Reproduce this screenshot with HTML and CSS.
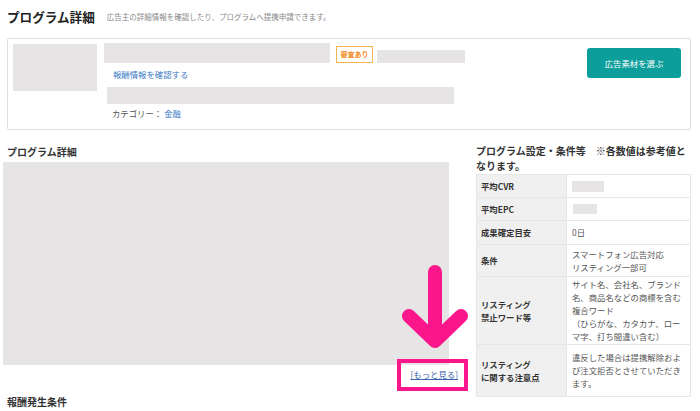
FILE: index.html
```html
<!DOCTYPE html>
<html lang="ja">
<head>
<meta charset="utf-8">
<link rel="stylesheet" href="styles.css">
</head>
<body>
<header class="page-head">
  <h1 class="page-title">プログラム詳細</h1>
  <p class="page-sub">広告主の詳細情報を確認したり、プログラムへ提携申請できます。</p>
</header>

<section class="card">
  <div class="thumb"></div>
  <div class="info">
    <div class="info-top">
      <div class="ph ph-title"></div>
      <span class="badge">審査あり</span>
      <div class="ph ph-small"></div>
    </div>
    <a class="link reward-link" href="#">報酬情報を確認する</a>
    <div class="ph ph-wide"></div>
    <p class="category">カテゴリー： <a class="link" href="#">金融</a></p>
  </div>
  <button class="btn-primary">広告素材を選ぶ</button>
</section>

<main class="main">
  <div class="left-col">
    <h2 class="sec-title">プログラム詳細</h2>
    <div class="ph detail-box"></div>
    <div class="more-row"><a class="more-link" href="#">[もっと見る]</a></div>
    <h2 class="sec-title sec-title-2">報酬発生条件</h2>
    <svg class="arrow" width="80" height="95" viewBox="0 0 80 95" aria-hidden="true">
      <path d="M40 14 L40 80 M14 58 L40 83 L66 58" fill="none" stroke="#fb168b" stroke-width="14" stroke-linecap="round" stroke-linejoin="round"/>
    </svg>
    <div class="highlight"></div>
  </div>
  <aside class="right-col">
    <h2 class="side-title">プログラム設定・条件等　※各数値は参考値と<br>なります。</h2>
    <table class="spec">
      <tr class="r23"><th>平均CVR</th><td><div class="ph ph-cvr"></div></td></tr>
      <tr class="r23"><th>平均EPC</th><td><div class="ph ph-epc"></div></td></tr>
      <tr class="r24"><th>成果確定目安</th><td>0日</td></tr>
      <tr class="r32"><th>条件</th><td>スマートフォン広告対応<br>リスティング一部可</td></tr>
      <tr class="r68"><th>リスティング<br>禁止ワード等</th><td>サイト名、会社名、ブランド<br>名、商品名などの商標を含む<br>複合ワード<br>（ひらがな、カタカナ、ロー<br>マ字、打ち間違い含む）</td></tr>
      <tr class="r52"><th>リスティング<br>に関する注意点</th><td>違反した場合は提携解除およ<br>び注文拒否とさせていただき<br>ます。</td></tr>
    </table>
  </aside>
</main>
</body>
</html>
```

FILE: styles.css
```css
* { box-sizing: border-box; }
html, body { margin: 0; padding: 0; background: #fff; }
body {
  font-family: "Noto Sans CJK JP", "Noto Sans", sans-serif;
  color: #333;
  width: 700px;
  height: 411px;
  overflow: hidden;
}
h1, h2, p { margin: 0; }

.page-head {
  display: flex;
  align-items: center;
  padding: 8px 7px 0;
  height: 26px;
}
.page-title {
  font-size: 12.6px;
  line-height: 18px;
  font-weight: 700;
  color: #222;
}
.page-sub {
  margin-left: 12px;
  font-size: 7.5px;
  line-height: 18px;
  color: #888;
}

.card {
  margin: 12px 9px 0 7px;
  height: 92px;
  border: 1px solid #dedede;
  border-radius: 2px;
  padding: 4px 9px 0 5px;
  display: flex;
  align-items: flex-start;
}
.ph { background: #e6e4e4; }
.thumb {
  width: 84px;
  height: 47px;
  margin-top: 1px;
  background: #e6e4e4;
}
.info {
  margin-left: 7px;
  display: flex;
  flex-direction: column;
  align-items: flex-start;
  flex: 1;
}
.info-top {
  display: flex;
  align-items: flex-end;
}
.ph-title { width: 226px; height: 20px; }
.badge {
  margin-left: 6px;
  width: 37px;
  height: 17px;
  border: 1px solid #f7b551;
  color: #f08c1c;
  font-size: 7px;
  font-weight: 700;
  line-height: 15px;
  text-align: center;
}
.ph-small { margin-left: 4px; width: 88px; height: 13px; }
.link {
  color: #3b7cc7;
  text-decoration: none;
}
.reward-link {
  margin: 5px 0 0 9px;
  font-size: 8.4px;
  line-height: 12px;
}
.ph-wide { margin: 7px 0 0 3px; width: 347px; height: 17px; }
.category {
  margin: 3px 0 0 8px;
  font-size: 8.4px;
  line-height: 12px;
  color: #555;
}
.btn-primary {
  margin-top: 5px;
  width: 94px;
  height: 30px;
  border: none;
  border-radius: 3px;
  background: #0b9e9b;
  color: #fff;
  font-family: inherit;
  font-size: 8.4px;
  padding: 0;
}

.main {
  display: flex;
  margin-top: 15px;
  padding-left: 3px;
}
.left-col {
  position: relative;
  width: 455px;
}
.sec-title {
  padding-left: 4px;
  font-size: 10px;
  line-height: 14px;
  font-weight: 700;
  color: #333;
}
.detail-box {
  margin-top: 3px;
  width: 446px;
  height: 203px;
}
.more-row {
  margin-top: 3px;
  display: flex;
  justify-content: flex-end;
}
.more-link {
  font-size: 8.4px;
  line-height: 12px;
  color: #3a64a8;
  text-decoration: underline;
}
.sec-title-2 { margin-top: 15px; }
.arrow {
  position: absolute;
  left: 392px;
  top: 113px;
}
.highlight {
  position: absolute;
  left: 394px;
  top: 214px;
  width: 71px;
  height: 32px;
  border: 4px solid #fb168b;
}

.right-col {
  margin-left: 18px;
  width: 215px;
}
.side-title {
  margin-top: -1px;
  font-size: 10px;
  line-height: 14.5px;
  font-weight: 700;
  color: #333;
  white-space: nowrap;
}
.spec {
  margin-top: 1px;
  width: 215px;
  border-collapse: collapse;
  border: 1px solid #e6e6e6;
  font-size: 8.4px;
  line-height: 13px;
}
.spec th {
  width: 90px;
  background: #f0f0f0;
  text-align: left;
  font-weight: 700;
  color: #333;
  padding: 0 4px;
  border-bottom: 1px solid #e6e6e6;
  border-right: 1px solid #e6e6e6;
  vertical-align: middle;
}
.spec td {
  padding: 0 5px;
  color: #555;
  border-bottom: 1px solid #e6e6e6;
  vertical-align: middle;
}
.r23 th, .r23 td { height: 23px; }
.r24 th, .r24 td { height: 24px; }
.r32 th, .r32 td { height: 32px; }
.r68 th, .r68 td { height: 68px; }
.r52 th, .r52 td { height: 52px; }
.ph-cvr { width: 32px; height: 11px; }
.ph-epc { width: 24px; height: 10px; margin-left: 1px; }
```
